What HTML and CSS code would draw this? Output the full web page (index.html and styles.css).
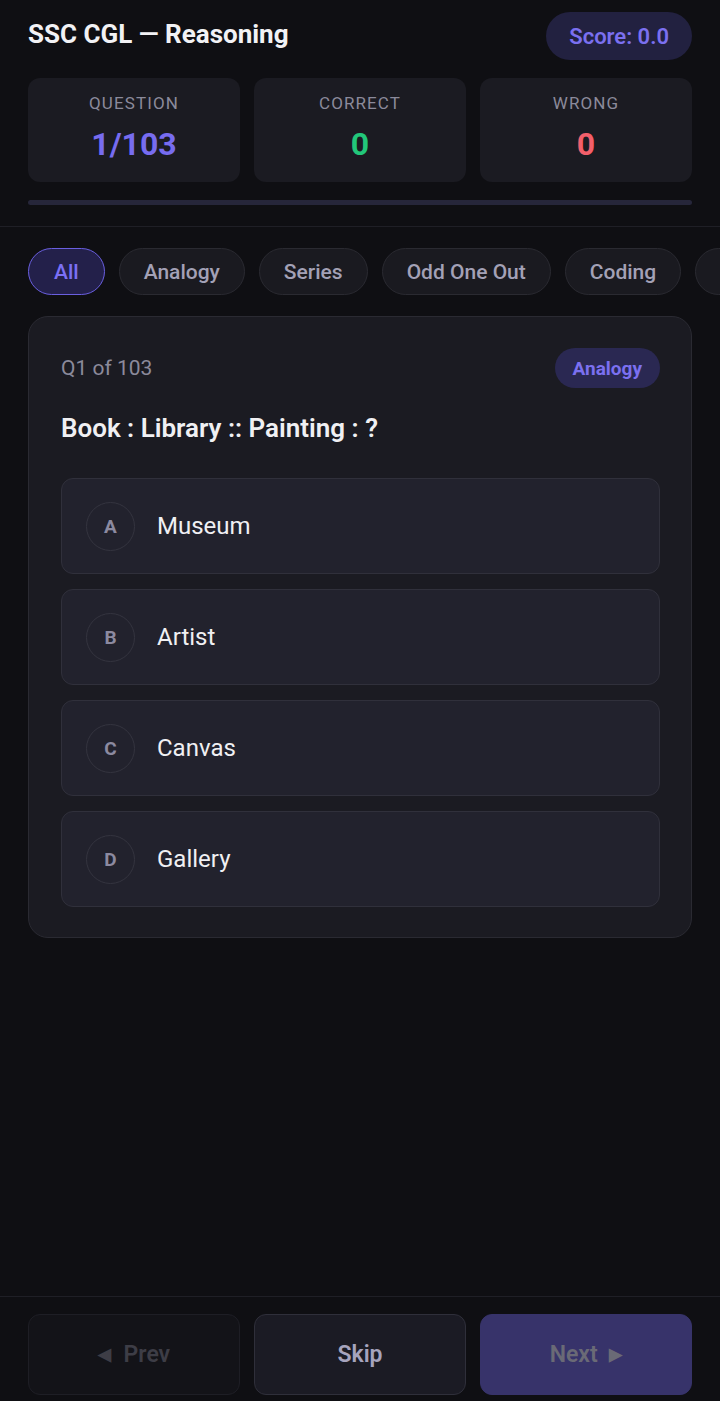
FILE: index.html
```html
<!DOCTYPE html>
<html>
<head>
<meta charset="utf-8">
<link rel="stylesheet" href="styles.css">
</head>
<body>
<div class="app">
  <header class="top">
    <div class="title-row">
      <h1 class="title">SSC CGL — Reasoning</h1>
      <div class="score">Score: 0.0</div>
    </div>
    <div class="stats">
      <div class="stat"><div class="stat-label">QUESTION</div><div class="stat-value purple">1/103</div></div>
      <div class="stat"><div class="stat-label">CORRECT</div><div class="stat-value green">0</div></div>
      <div class="stat"><div class="stat-label">WRONG</div><div class="stat-value red">0</div></div>
    </div>
    <div class="progress"><div class="progress-fill" style="width:0%"></div></div>
  </header>
  <nav class="chips">
    <button class="chip active">All</button>
    <button class="chip">Analogy</button>
    <button class="chip">Series</button>
    <button class="chip">Odd One Out</button>
    <button class="chip">Coding</button>
    <button class="chip">Blood Relations</button>
  </nav>
  <main class="content">
    <section class="card">
      <div class="card-head">
        <span class="qnum">Q1 of 103</span>
        <span class="badge">Analogy</span>
      </div>
      <div class="question">Book : Library :: Painting : ?</div>
      <div class="options">
        <div class="option"><span class="letter">A</span><span class="opt-text">Museum</span></div>
        <div class="option"><span class="letter">B</span><span class="opt-text">Artist</span></div>
        <div class="option"><span class="letter">C</span><span class="opt-text">Canvas</span></div>
        <div class="option"><span class="letter">D</span><span class="opt-text">Gallery</span></div>
      </div>
    </section>
  </main>
  <footer class="bottom">
    <button class="btn prev"><span class="arrow">◀</span> Prev</button>
    <button class="btn skip">Skip</button>
    <button class="btn next">Next <span class="arrow">▶</span></button>
  </footer>
</div>
</body>
</html>
```

FILE: styles.css
```css
* { box-sizing: border-box; }
html, body { margin: 0; padding: 0; }
body {
  background: #0f0f13;
  font-family: Roboto, "Liberation Sans", sans-serif;
  color: #ececf1;
  width: 720px;
  height: 1401px;
  overflow: hidden;
}
.app {
  display: flex;
  flex-direction: column;
  height: 1401px;
}
.top {
  padding: 12px 28px 21px;
  border-bottom: 1px solid #1f1f26;
}
.title-row {
  display: flex;
  justify-content: space-between;
  align-items: center;
  height: 48px;
}
.title {
  margin: 0;
  font-size: 26px;
  font-weight: 700;
  color: #f2f2f5;
  position: relative;
  top: -2px;
}
.score {
  height: 48px;
  padding: 0 23px;
  display: flex;
  align-items: center;
  background: #222140;
  border-radius: 24px;
  color: #7b70f0;
  font-size: 22px;
  font-weight: 600;
}
.stats {
  margin-top: 18px;
  display: grid;
  grid-template-columns: repeat(3, 1fr);
  gap: 14px;
}
.stat {
  height: 104px;
  background: #1b1b22;
  border-radius: 12px;
  display: flex;
  flex-direction: column;
  align-items: center;
  padding-top: 15px;
}
.stat-label {
  font-size: 17px;
  letter-spacing: 1.1px;
  color: #8b8a9b;
}
.stat-value {
  margin-top: 12px;
  font-size: 32px;
  font-weight: 700;
}
.purple { color: #776cf0; }
.green { color: #22c77a; }
.red { color: #f35f6a; }
.progress {
  margin-top: 18px;
  height: 5px;
  background: #26263a;
  border-radius: 3px;
  overflow: hidden;
}
.progress-fill { height: 100%; background: #776cf0; }
.chips {
  display: flex;
  gap: 14px;
  padding: 21px 28px 0;
  overflow: hidden;
  white-space: nowrap;
}
.chip {
  flex: none;
  height: 47px;
  padding: 0 24px;
  border-radius: 24px;
  background: #1a1a20;
  border: 1px solid #2a2a31;
  color: #a3a1b6;
  font-family: Roboto, "Liberation Sans", sans-serif;
  font-size: 21px;
  font-weight: 500;
}
.chip.active {
  background: #23204a;
  border: 1px solid #6a5fe0;
  color: #7b70f5;
  padding: 0 25px;
}
.content {
  flex: 1;
  padding: 21px 28px 0;
}
.card {
  background: #1b1b22;
  border: 1px solid #2a2a32;
  border-radius: 20px;
  padding: 31px 31px 30px 32px;
}
.card-head {
  display: flex;
  justify-content: space-between;
  align-items: center;
  height: 40px;
}
.qnum {
  font-size: 21px;
  color: #8b8a9b;
}
.badge {
  height: 40px;
  padding: 0 18px;
  display: flex;
  align-items: center;
  background: #2a2852;
  border-radius: 20px;
  color: #7b70f0;
  font-size: 19px;
  font-weight: 700;
}
.question {
  margin-top: 22px;
  font-size: 26px;
  font-weight: 600;
  color: #f0f0f3;
  line-height: 36px;
}
.options {
  margin-top: 32px;
  display: flex;
  flex-direction: column;
  gap: 15px;
}
.option {
  height: 96px;
  background: #22222d;
  border: 1px solid #30303b;
  border-radius: 12px;
  display: flex;
  align-items: center;
  padding-left: 24px;
}
.letter {
  width: 49px;
  height: 49px;
  border-radius: 50%;
  border: 1px solid #34343f;
  display: flex;
  align-items: center;
  justify-content: center;
  font-size: 19px;
  font-weight: 700;
  color: #8c8aa0;
}
.opt-text {
  margin-left: 22px;
  font-size: 24px;
  color: #f0f0f3;
}
.bottom {
  border-top: 1px solid #1f1f26;
  padding: 17px 28px 6px;
  display: grid;
  grid-template-columns: repeat(3, 1fr);
  gap: 14px;
}
.btn {
  height: 81px;
  border-radius: 12px;
  font-family: Roboto, "Liberation Sans", sans-serif;
  font-size: 23px;
  font-weight: 600;
}
.btn .arrow {
  font-size: 17px;
  position: relative;
  top: -2px;
}
.btn.prev .arrow { margin-right: 7px; }
.btn.next .arrow { margin-left: 6px; }
.btn.prev {
  background: #131318;
  border: 1px solid #1e1e25;
  color: #3d3d46;
}
.btn.skip {
  background: #1b1b24;
  border: 1px solid #2f2f3a;
  color: #a6a4bd;
}
.btn.next {
  background: #37336a;
  border: 1px solid #37336a;
  color: #6a6a76;
}
```
